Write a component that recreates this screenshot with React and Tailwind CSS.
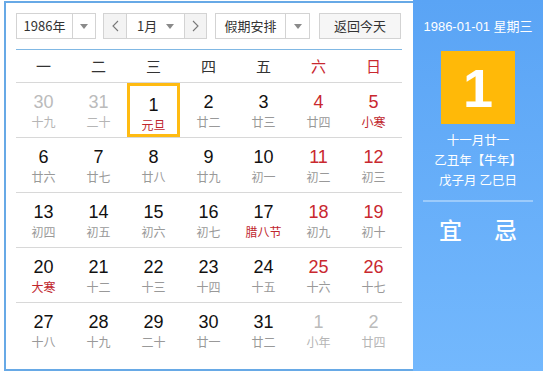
const weekdays = ['一', '二', '三', '四', '五', '六', '日'];

// [day, lunar, muted, festival]
const weeks = [
  [['30', '十九', true], ['31', '二十', true], ['1', '元旦', false, true], ['2', '廿二'], ['3', '廿三'], ['4', '廿四'], ['5', '小寒', false, true]],
  [['6', '廿六'], ['7', '廿七'], ['8', '廿八'], ['9', '廿九'], ['10', '初一'], ['11', '初二'], ['12', '初三']],
  [['13', '初四'], ['14', '初五'], ['15', '初六'], ['16', '初七'], ['17', '腊八节', false, true], ['18', '初九'], ['19', '初十']],
  [['20', '大寒', false, true], ['21', '十二'], ['22', '十三'], ['23', '十四'], ['24', '十五'], ['25', '十六'], ['26', '十七']],
  [['27', '十八'], ['28', '十九'], ['29', '二十'], ['30', '廿一'], ['31', '廿二'], ['1', '小年', true], ['2', '廿四', true]],
];

const cjk = "font-['Noto_Sans_CJK_SC','Liberation_Sans',sans-serif]";
const num = "font-['Liberation_Sans','Noto_Sans_CJK_SC',sans-serif]";

function Caret() {
  return (
    <svg width="8" height="5" viewBox="0 0 8 5" className="fill-[#8a8a8a]">
      <path d="M0 0h8L4 5z" />
    </svg>
  );
}

function Chevron({ dir }) {
  return (
    <svg width="7" height="12" viewBox="0 0 7 12" fill="none" stroke="#777" strokeWidth="1.1">
      {dir === 'left' ? <path d="M6 1L1 6l5 5" /> : <path d="M1 1l5 5-5 5" />}
    </svg>
  );
}

function Toolbar() {
  return (
    <div className={`flex items-center h-[26px] text-[13px] text-[#333] ${cjk}`}>
      <div className="flex h-full w-[80px] border border-[#d3d3d3] bg-white">
        <div className="flex-1 flex items-center justify-center">1986年</div>
        <div className="w-[23px] border-l border-[#d3d3d3] flex items-center justify-center">
          <Caret />
        </div>
      </div>
      <div className="flex h-full w-[104px] ml-[7px] border border-[#d3d3d3] bg-white">
        <div className="w-[23px] bg-[#f3f3f3] border-r border-[#d3d3d3] flex items-center justify-center">
          <Chevron dir="left" />
        </div>
        <div className="flex-1 flex items-center justify-between pl-[10px] pr-[10px]">
          <span>1月</span>
          <Caret />
        </div>
        <div className="w-[22px] bg-[#f3f3f3] border-l border-[#d3d3d3] flex items-center justify-center">
          <Chevron dir="right" />
        </div>
      </div>
      <div className="flex h-full w-[95px] ml-[8px] border border-[#d3d3d3] bg-white">
        <div className="flex-1 flex items-center justify-center">假期安排</div>
        <div className="w-[24px] border-l border-[#d3d3d3] flex items-center justify-center">
          <Caret />
        </div>
      </div>
      <div className="h-full w-[82px] ml-[9px] border border-[#d3d3d3] bg-[#f6f6f6] flex items-center justify-center">
        返回今天
      </div>
    </div>
  );
}

function DayCell({ cell, col }) {
  const [day, lunar, muted, festival] = cell;
  const selected = day === '1' && !muted;
  const weekend = col >= 5;
  const dayColor = muted ? 'text-[#bbbbbb]' : weekend ? 'text-[#c9282f]' : 'text-[#111]';
  const lunarColor = muted ? 'text-[#b5b5b5]' : festival ? 'text-[#c0262d]' : 'text-[#999]';
  return (
    <div
      className={`w-[55px] flex flex-col items-center pt-[9px] ${
        selected ? 'border-[3px] border-[#ffbb12] mx-[1px] !w-[53px] pt-[6px]' : ''
      }`}
    >
      <span className={`text-[18px] leading-[21px] ${num} ${dayColor}`}>{day}</span>
      <span className={`text-[12px] leading-[17px] ${cjk} ${lunarColor}`}>{lunar}</span>
    </div>
  );
}

function SidePanel() {
  return (
    <div className="w-[130px] -mt-[3px] -mr-[2px] -mb-[2px] bg-gradient-to-b from-[#5aa4f5] to-[#73b8fd] flex flex-col items-center text-white">
      <div className={`mt-[18px] text-[13px] leading-[18px] ${num}`}>1986-01-01 星期三</div>
      <div className="mt-[15px] w-[74px] h-[73px] bg-[#ffb908] flex items-center justify-center">
        <span className={`text-[54px] leading-none font-bold ${num}`}>1</span>
      </div>
      <div className={`mt-[6px] flex flex-col items-center text-[12.5px] leading-[20px] ${cjk}`}>
        <span>十一月廿一</span>
        <span>乙丑年【牛年】</span>
        <span>戊子月 乙巳日</span>
      </div>
      <div className="mt-[10px] w-[110px] h-[2px] bg-[#9ccbfb]" />
      <div className={`mt-[12px] flex gap-[32px] text-[23px] leading-[30px] font-medium ${cjk}`}>
        <span>宜</span>
        <span>忌</span>
      </div>
    </div>
  );
}

export default function App() {
  return (
    <div className="w-[544px] h-[373px] bg-white pt-[1px]">
      <div className="ml-[4px] w-[539px] h-[370px] border-2 border-[#67a9e6] flex bg-white">
        <div className="flex-1 pl-[10px] pr-[11px] pt-[10px]">
          <Toolbar />
          <div className="mt-[10px] h-px bg-[#80b8e4]" />
          <div className="flex h-[33px] border-b border-[#d8d8d8] items-center">
            {weekdays.map((w, i) => (
              <div
                key={w}
                className={`w-[55px] text-center text-[15px] ${cjk} ${i >= 5 ? 'text-[#c9282f]' : 'text-[#333]'}`}
              >
                {w}
              </div>
            ))}
          </div>
          {weeks.map((week, r) => (
            <div key={r} className={`flex h-[55px] ${r < weeks.length - 1 ? 'border-b border-[#d8d8d8]' : ''}`}>
              {week.map((cell, c) => (
                <DayCell key={c} cell={cell} col={c} />
              ))}
            </div>
          ))}
        </div>
        <SidePanel />
      </div>
    </div>
  );
}
